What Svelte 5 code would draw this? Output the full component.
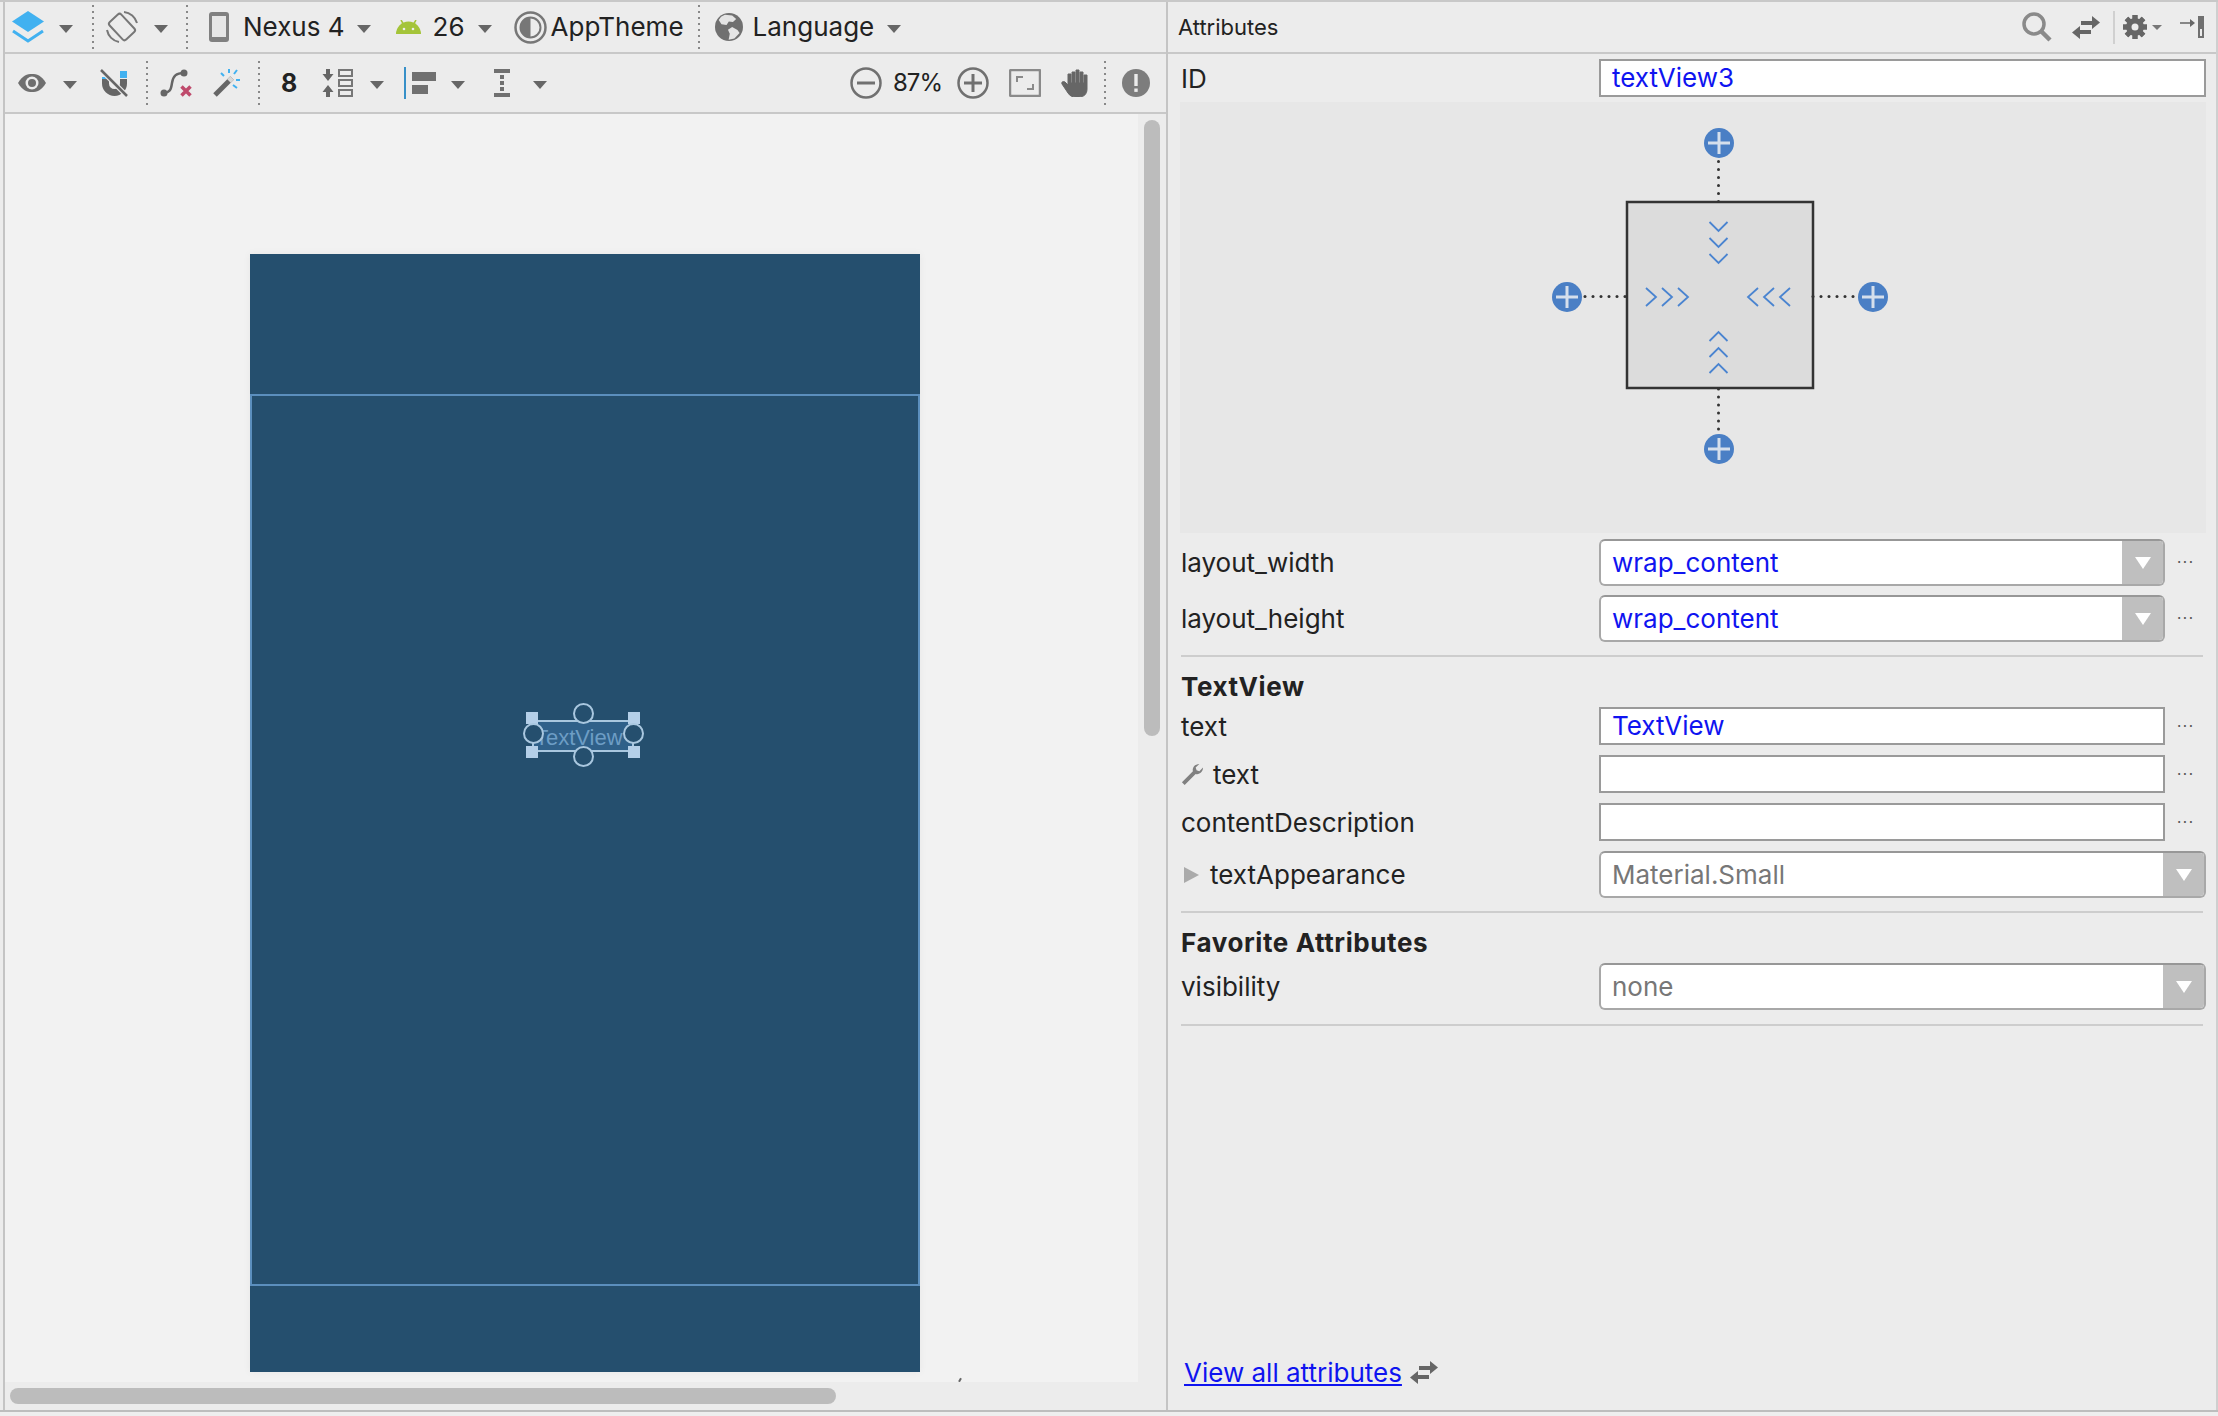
<script>
	const chevrons = [0, 1, 2];
	const teeth = [0, 45, 90, 135, 180, 225, 270, 315];
	const dots = [0, 1, 2, 3, 4, 5];
</script>

{#snippet swap()}
	<svg class="swap" viewBox="0 0 28 23">
		<path d="M9 5h11V0l8 6.500-8 6.500V9H9z" fill="#666" />
		<path d="M19 14H8v-4l-8 6.500L8 23v-5h11z" fill="#666" />
	</svg>
{/snippet}

{#snippet plus(cx, cy)}
	<circle {cx} {cy} r="15" fill="#4a7fc5" />
	<path d="M{cx - 11} {cy}h22M{cx} {cy - 11}v22" stroke="#d5dfec" stroke-width="3" />
{/snippet}

<div class="app">
	<section class="design">
		<div class="toolbar top">
			<svg class="layers" viewBox="0 0 32 32">
				<path d="M16 0l16 10.500-16 10.500L0 10.500z" fill="#41b1f0" />
				<path d="M1 20l15 10 15-10" fill="none" stroke="#41b1f0" stroke-width="3" />
			</svg>
			<i class="caret c1"></i>
			<i class="sep s1"></i>
			<svg class="rotate" viewBox="0 0 32 32">
				<rect x="8" y="4" width="16" height="24" rx="2.500" fill="none" stroke="#777" stroke-width="2" transform="rotate(-43 16 16)" />
				<path d="M18 1A15 15 0 0 1 31 12M1 19A15 15 0 0 0 13 31" fill="none" stroke="#777" stroke-width="2" />
			</svg>
			<i class="caret c2"></i>
			<i class="sep s2"></i>
			<svg class="phone" viewBox="0 0 20 30">
				<rect width="20" height="30" rx="3" fill="#808080" />
				<rect x="3" y="4" width="14" height="21" fill="#e6e6e6" />
			</svg>
			<span class="tb-text nexus">Nexus 4</span>
			<i class="caret c3"></i>
			<svg class="android" viewBox="0 0 25 14">
				<path d="M0 14a12.500 12.500 0 0 1 25 0z" fill="#a4c439" />
				<path d="M5 0l3 5M20 0l-3 5" stroke="#a4c439" stroke-width="1.500" />
				<circle cx="8" cy="9" r="1.300" fill="#ececec" />
				<circle cx="17" cy="9" r="1.300" fill="#ececec" />
			</svg>
			<span class="tb-text api">26</span>
			<i class="caret c4"></i>
			<svg class="theme" viewBox="0 0 33 33">
				<circle cx="16.500" cy="16.500" r="15" fill="none" stroke="#777" stroke-width="2.500" />
				<circle cx="16.500" cy="16.500" r="10" fill="none" stroke="#777" stroke-width="2" />
				<path d="M16.500 6.500a10 10 0 0 0 0 20z" fill="#777" />
			</svg>
			<span class="tb-text apptheme">AppTheme</span>
			<i class="sep s3"></i>
			<svg class="globe" viewBox="0 0 28 28">
				<circle cx="14" cy="14" r="14" fill="#707070" />
				<path d="M6 4l7-2 5 2-2 4-4 1-1 4-5 1-4-3 1-4zM17 13l6 1 3 2-3 7-5 3-1-6-3-3z" fill="#e4e4e4" transform="rotate(20 14 14)" />
			</svg>
			<span class="tb-text language">Language</span>
			<i class="caret c5"></i>
		</div>

		<div class="toolbar second">
			<svg class="eye" viewBox="0 0 28 18">
				<path d="M0 9C5 1 9 0 14 0s9 1 14 9c-5 8-9 9-14 9S5 17 0 9z" fill="#6f6f6f" />
				<circle cx="14" cy="9" r="6.500" fill="#ececec" />
				<circle cx="14" cy="9" r="4" fill="#6f6f6f" />
			</svg>
			<i class="caret c6"></i>
			<svg class="magnet" viewBox="0 0 29 28">
				<rect x="2" y="8" width="7" height="3" fill="#41b1f0" />
				<rect x="20" y="2" width="7" height="7" fill="#41b1f0" />
				<path d="M5.500 10v4.500a9 9 0 0 0 18 0V10" fill="none" stroke="#666" stroke-width="7" />
				<path d="M1 1l26 26" stroke="#ececec" stroke-width="5" />
				<path d="M1 1l26 26" stroke="#666" stroke-width="2.500" />
			</svg>
			<i class="sep s4"></i>
			<svg class="clear" viewBox="0 0 32 28">
				<path d="M4 24c6-1 7-3 8-10s4-10 12-10" fill="none" stroke="#666" stroke-width="2.500" />
				<circle cx="4" cy="24" r="3.500" fill="#666" />
				<circle cx="24" cy="4" r="3.500" fill="#666" />
				<path d="M21.500 17.500l9 9M30.500 17.500l-9 9" stroke="#bf4a6c" stroke-width="3.500" />
			</svg>
			<svg class="wand" viewBox="0 0 28 28">
				<path d="M3 26L20 9" stroke="#666" stroke-width="5" />
				<path d="M17 12l3-3" stroke="#d8d8d8" stroke-width="5" />
				<path d="M17 0v4M25 1l-3 4M28 11h-4M25 19l-4-3M9 4l3 3" stroke="#41b1f0" stroke-width="2" />
			</svg>
			<i class="sep s5"></i>
			<span class="margin-val">8</span>
			<svg class="stack" viewBox="0 0 31 28">
				<path d="M4 0h4v5h3.500L6 12 .5 5H4zM4 28h4v-5h3.500L6 16 .5 23H4z" fill="#666" />
				<path d="M17 1h13v6H17zM17 11h13v6H17zM17 21h13v6H17z" fill="none" stroke="#777" stroke-width="2" />
			</svg>
			<i class="caret c7"></i>
			<svg class="align" viewBox="0 0 33 32">
				<rect width="2" height="32" fill="#3790c8" />
				<rect x="8" y="5" width="24" height="9" fill="#707070" />
				<rect x="8" y="18" width="16" height="9" fill="#707070" />
			</svg>
			<i class="caret c8"></i>
			<svg class="spacing" viewBox="0 0 16 28">
				<rect width="16" height="4" fill="#707070" />
				<rect y="24" width="16" height="4" fill="#707070" />
				<path d="M8 6v16" stroke="#707070" stroke-width="4" stroke-dasharray="4 2" />
			</svg>
			<i class="caret c9"></i>

			<svg class="zoom-out" viewBox="0 0 32 32">
				<circle cx="16" cy="16" r="14.500" fill="none" stroke="#707070" stroke-width="2.500" />
				<path d="M7 16h18" stroke="#707070" stroke-width="3" />
			</svg>
			<span class="tb-text percent">87%</span>
			<svg class="zoom-in" viewBox="0 0 32 32">
				<circle cx="16" cy="16" r="14.500" fill="none" stroke="#707070" stroke-width="2.500" />
				<path d="M7 16h18M16 7v18" stroke="#707070" stroke-width="3" />
			</svg>
			<svg class="fit" viewBox="0 0 32 28">
				<rect x="1" y="1" width="30" height="26" rx="1" fill="none" stroke="#8a8a8a" stroke-width="2.500" />
				<path d="M8 13V8h6M24 15v5h-6" fill="none" stroke="#8a8a8a" stroke-width="2" />
			</svg>
			<svg class="hand" viewBox="0 0 27 28">
				<path d="M7 5v11l-3-3c-2-1-4 0-3 2l6 9c2 3 4 4 8 4h3c5 0 8-3 8-8V6h-3v8h-1V3h-3v11h-1V1h-3v13h-1V3h-3v11h-1V5z" fill="#666" stroke="#666" stroke-width="1" />
			</svg>
			<i class="sep s6"></i>
			<svg class="warn" viewBox="0 0 28 28">
				<circle cx="14" cy="14" r="14" fill="#7d7d7d" />
				<rect x="12.300" y="5" width="3.400" height="12" fill="#ececec" />
				<rect x="12.300" y="19.500" width="3.400" height="3.400" fill="#ececec" />
			</svg>
		</div>

		<div class="canvas-row">
			<div class="canvas">
				<div class="device">
					<div class="blueprint"></div>
					<div class="widget">
						<span class="widget-box">TextView</span>
						<i class="corner tl"></i>
						<i class="corner tr"></i>
						<i class="corner bl"></i>
						<i class="corner br"></i>
						<i class="anchor at"></i>
						<i class="anchor al"></i>
						<i class="anchor ar"></i>
						<i class="anchor ab"></i>
					</div>
				</div>
				<i class="tick"></i>
			</div>
			<div class="v-track"><div class="v-thumb"></div></div>
		</div>
		<div class="h-track"><div class="h-thumb"></div></div>
	</section>

	<section class="inspector">
		<header class="ins-head">
			<span class="ins-title">Attributes</span>
			<svg class="search" viewBox="0 0 30 30">
				<circle cx="12" cy="12" r="10" fill="none" stroke="#8a8a8a" stroke-width="3.500" />
				<path d="M19 19l9 9" stroke="#8a8a8a" stroke-width="4.500" />
			</svg>
			{@render swap()}
			<i class="head-sep"></i>
			<svg class="gear" viewBox="0 0 24 24">
				{#each teeth as a}
					<rect x="9.500" y="0" width="5" height="24" fill="#666" transform="rotate({a} 12 12)" />
				{/each}
				<circle cx="12" cy="12" r="9" fill="#666" />
				<circle cx="12" cy="12" r="3.500" fill="#ececec" />
			</svg>
			<i class="mini-caret"></i>
			<svg class="pin" viewBox="0 0 24 22">
				<path d="M0 7h11" stroke="#666" stroke-width="1.500" />
				<path d="M10 3l5 4-5 4z" fill="#666" />
				<rect x="18" y="0" width="6" height="22" fill="#707070" />
				<rect x="20" y="13" width="2" height="7" fill="#ececec" />
			</svg>
		</header>

		<div class="ins-body">
			<div class="row id-row">
				<span class="label">ID</span>
				<span class="field value">textView3</span>
			</div>

			<div class="constraint">
				<svg class="constraint-svg" viewBox="0 0 380 380">
					<rect x="107" y="92" width="186" height="186" fill="#dcdcdc" stroke="#333" stroke-width="2.500" />
					<g fill="#333">
						{#each dots as d}
							<circle cx="198.500" cy={51.500 + d * 8} r="1.500" />
							<circle cx="198.500" cy={279 + d * 8} r="1.500" />
							<circle cx={65 + d * 8} cy="186.500" r="1.500" />
							<circle cx={293 + d * 8} cy="186.500" r="1.500" />
						{/each}
					</g>
					{@render plus(199, 33)}
					{@render plus(47, 187)}
					{@render plus(353, 187)}
					{@render plus(199, 339)}
					<g fill="none" stroke="#4a84d0" stroke-width="1.800">
						{#each chevrons as c}
							<path d="M189.500 {112 + c * 16}l9 9 9-9" />
							<path d="M189.500 {263 - c * 16}l9-9 9 9" />
							<path d="M{126 + c * 16} 178l10 9-10 9" />
							<path d="M{270 - c * 16} 178l-10 9 10 9" />
						{/each}
					</g>
				</svg>
			</div>

			<div class="row dd-row first">
				<span class="label">layout_width</span>
				<div class="combo"><span class="value">wrap_content</span><i class="combo-btn"></i></div>
				<span class="more">...</span>
			</div>
			<div class="row dd-row second-dd">
				<span class="label">layout_height</span>
				<div class="combo"><span class="value">wrap_content</span><i class="combo-btn"></i></div>
				<span class="more">...</span>
			</div>

			<hr />
			<h3>TextView</h3>

			<div class="row input-row">
				<span class="label">text</span>
				<span class="field value">TextView</span>
				<span class="more">...</span>
			</div>
			<div class="row input-row">
				<span class="label">
					<svg class="wrench" viewBox="0 0 24 24">
						<path d="M1 21l12-12c-1-4 2-8 7-8l-4 4 1 3 3 1 4-4c0 5-4 8-8 7L4 24z" fill="#808080" />
					</svg>text
				</span>
				<span class="field"></span>
				<span class="more">...</span>
			</div>
			<div class="row input-row">
				<span class="label">contentDescription</span>
				<span class="field"></span>
				<span class="more">...</span>
			</div>
			<div class="row input-row wide">
				<span class="label"><i class="expand"></i>textAppearance</span>
				<div class="combo"><span class="hint">Material.Small</span><i class="combo-btn"></i></div>
			</div>

			<hr class="hr2" />
			<h3>Favorite Attributes</h3>

			<div class="row wide vis-row">
				<span class="label">visibility</span>
				<div class="combo"><span class="hint">none</span><i class="combo-btn"></i></div>
			</div>

			<hr class="hr3" />

			<div class="view-all">
				<span class="link">View all attributes</span>
				{@render swap()}
			</div>
		</div>
	</section>
</div>

<style>
	:global(body) {
		background: #eeeeee;
	}
	.app {
		display: flex;
		box-sizing: border-box;
		width: 2218px;
		height: 1412px;
		overflow: hidden;
		padding-left: 3px;
		background: #ececec;
		border-top: 2px solid #c8c8c8;
		border-bottom: 2px solid #bdbdbd;
		font-family: Inter, 'Liberation Sans', sans-serif;
		font-size: 26px;
		color: #222;
	}
	svg {
		display: block;
		flex: none;
	}

	/* LEFT SIDE */
	.design {
		display: flex;
		flex-direction: column;
		width: 1163px;
		box-sizing: border-box;
		border-left: 2px solid #c4c4c4;
		flex: none;
	}
	.toolbar {
		display: flex;
		align-items: center;
		flex: none;
		box-sizing: border-box;
		border-bottom: 2px solid #c8c8c8;
	}
	.top {
		height: 52px;
	}
	.second {
		height: 60px;
	}
	.tb-text {
		flex: none;
		line-height: 30px;
	}
	.caret {
		flex: none;
		width: 0;
		height: 0;
		border-left: 7px solid transparent;
		border-right: 7px solid transparent;
		border-top: 8px solid #666;
		margin-top: 4px;
	}
	.sep {
		flex: none;
		width: 2px;
		height: 44px;
		background: repeating-linear-gradient(#888 0 2px, transparent 2px 6px);
	}

	.layers { width: 32px; height: 32px; margin-left: 7px; }
	.c1 { margin-left: 15px; }
	.s1 { margin-left: 19px; }
	.rotate { width: 32px; height: 32px; margin-left: 12px; }
	.c2 { margin-left: 16px; }
	.s2 { margin-left: 18px; }
	.phone { width: 20px; height: 30px; margin-left: 21px; }
	.nexus { margin-left: 14px; }
	.c3 { margin-left: 12px; }
	.android { width: 25px; height: 14px; margin-left: 25px; }
	.api { margin-left: 12px; }
	.c4 { margin-left: 13px; }
	.theme { width: 33px; height: 33px; margin-left: 22px; }
	.apptheme { margin-left: 4px; }
	.s3 { margin-left: 14px; }
	.globe { width: 28px; height: 28px; margin-left: 15px; }
	.language { margin-left: 10px; }
	.c5 { margin-left: 13px; }

	.eye { width: 28px; height: 18px; margin-left: 13px; }
	.c6 { margin-left: 17px; }
	.magnet { width: 29px; height: 28px; margin-left: 23px; }
	.s4 { margin-left: 17px; }
	.clear { width: 32px; height: 28px; margin-left: 12px; }
	.wand { width: 28px; height: 28px; margin-left: 20px; }
	.s5 { margin-left: 18px; }
	.margin-val { flex: none; width: 15px; margin-left: 21px; font-weight: 700; font-size: 25px; }
	.stack { width: 31px; height: 28px; margin-left: 26px; }
	.c7 { margin-left: 17px; }
	.align { width: 33px; height: 32px; margin-left: 20px; }
	.c8 { margin-left: 14px; }
	.spacing { width: 16px; height: 28px; margin-left: 29px; }
	.c9 { margin-left: 23px; }
	.zoom-out { width: 32px; height: 32px; margin-left: auto; }
	.percent { margin-left: 11px; font-size: 24px; letter-spacing: -1px; }
	.zoom-in { width: 32px; height: 32px; margin-left: 15px; }
	.fit { width: 32px; height: 28px; margin-left: 20px; }
	.hand { width: 27px; height: 28px; margin-left: 20px; }
	.s6 { margin-left: 16px; }
	.warn { width: 28px; height: 28px; margin-left: 16px; margin-right: 16px; }

	.canvas-row {
		display: flex;
		height: 1268px;
		flex: none;
	}
	.canvas {
		position: relative;
		width: 1133px;
		flex: none;
		overflow: hidden;
		box-sizing: border-box;
		padding: 140px 0 0 245px;
		background: #f2f2f2;
	}
	.device {
		position: relative;
		width: 670px;
		height: 1118px;
		background: #254f6e;
		box-shadow: 0 0 8px rgba(0, 0, 0, 0.05);
	}
	.tick {
		position: absolute;
		left: 954px;
		bottom: 0;
		width: 2px;
		height: 4px;
		background: #666;
		transform: rotate(30deg);
	}
	.blueprint {
		position: absolute;
		left: 0;
		right: 0;
		top: 140px;
		height: 892px;
		box-sizing: border-box;
		border: 2px solid #5b8fbe;
	}
	.widget {
		position: absolute;
		left: 282px;
		top: 466px;
		width: 102px;
		height: 32px;
	}
	.widget-box {
		display: block;
		box-sizing: border-box;
		height: 100%;
		padding-left: 1px;
		background: #2f6089;
		border: 2px solid #a9c7df;
		font-family: 'Liberation Sans', sans-serif;
		font-size: 22px;
		line-height: 31px;
		color: #6d9dc5;
		white-space: nowrap;
	}
	.corner {
		position: absolute;
		width: 12px;
		height: 12px;
		background: #b4cfe8;
	}
	.tl { left: -6px; top: -8px; }
	.tr { right: -6px; top: -8px; }
	.bl { left: -6px; bottom: -6px; }
	.br { right: -6px; bottom: -6px; }
	.anchor {
		position: absolute;
		box-sizing: border-box;
		width: 21px;
		height: 21px;
		border-radius: 50%;
		border: 2px solid #a9c7df;
		background: #254f6e;
	}
	.at { left: 41px; top: -17px; }
	.ab { left: 41px; bottom: -15px; }
	.al { left: -9px; top: 3px; }
	.ar { right: -10px; top: 3px; }

	.v-track {
		flex: 1;
		padding: 6px 0 0 6px;
	}
	.v-thumb {
		width: 16px;
		height: 616px;
		border-radius: 8px;
		background: #bcbcbc;
	}
	.h-track {
		flex: 1;
		padding: 6px 0 0 5px;
	}
	.h-thumb {
		width: 826px;
		height: 16px;
		border-radius: 8px;
		background: #bcbcbc;
	}

	/* RIGHT SIDE */
	.inspector {
		display: flex;
		flex-direction: column;
		flex: 1;
		box-sizing: border-box;
		border-left: 2px solid #c4c4c4;
		border-right: 2px solid #cfcfcf;
	}
	.ins-head {
		display: flex;
		align-items: center;
		flex: none;
		box-sizing: border-box;
		height: 52px;
		border-bottom: 2px solid #c8c8c8;
		padding-left: 10px;
	}
	.ins-title {
		font-size: 22px;
		margin-right: auto;
	}
	.search { width: 30px; height: 30px; }
	.swap { width: 28px; height: 23px; margin-left: 20px; }
	.head-sep {
		flex: none;
		width: 2px;
		height: 33px;
		margin-left: 13px;
		background: #d0d0d0;
	}
	.gear { width: 24px; height: 24px; margin-left: 8px; }
	.mini-caret {
		flex: none;
		width: 0;
		height: 0;
		margin-left: 5px;
		border-left: 5px solid transparent;
		border-right: 5px solid transparent;
		border-top: 5px solid #777;
	}
	.pin { width: 24px; height: 22px; margin-left: 18px; margin-right: 12px; }

	.ins-body {
		display: flex;
		flex-direction: column;
		flex: 1;
		padding: 5px 10px 0 12px;
	}
	.row {
		display: flex;
		align-items: center;
		flex: none;
	}
	.label {
		display: flex;
		align-items: center;
		flex: none;
		box-sizing: border-box;
		width: 419px;
		padding-left: 1px;
	}
	.value {
		color: #0f14f0;
	}
	.hint {
		color: #777;
	}
	.field {
		display: block;
		flex: 1;
		box-sizing: border-box;
		height: 38px;
		line-height: 34px;
		padding-left: 11px;
		background: #fff;
		border: 2px solid #9a9a9a;
	}
	.more {
		flex: none;
		box-sizing: border-box;
		width: 41px;
		padding: 0 0 10px 12px;
		font-size: 15px;
		letter-spacing: 1.5px;
		color: #555;
	}
	.constraint {
		flex: none;
		height: 431px;
		margin-top: 5px;
		padding: 8px 0 0 340px;
		box-sizing: border-box;
		background: #e7e7e7;
	}
	.constraint-svg {
		width: 380px;
		height: 380px;
	}
	.combo {
		display: flex;
		align-items: center;
		flex: 1;
		box-sizing: border-box;
		height: 47px;
		padding-left: 11px;
		overflow: hidden;
		background: #fff;
		border: 2px solid #a8a8a8;
		border-top-color: #979797;
		border-radius: 6px;
	}
	.combo span {
		margin-right: auto;
	}
	.combo-btn {
		position: relative;
		flex: none;
		width: 43px;
		height: 47px;
		margin-right: -2px;
		background: #bfbfbf;
	}
	.combo-btn::after {
		content: '';
		position: absolute;
		left: 13px;
		top: 18px;
		border-left: 8px solid transparent;
		border-right: 8px solid transparent;
		border-top: 12px solid #fff;
	}
	.first {
		margin-top: 6px;
	}
	.second-dd {
		margin-top: 9px;
	}
	.input-row {
		margin-bottom: 10px;
	}
	.wide {
		margin-bottom: 0;
	}
	hr {
		flex: none;
		width: 1022px;
		height: 2px;
		margin: 13px 0 0 1px;
		border: 0;
		background: #cdcdcd;
	}
	.hr2 { margin-top: 13px; }
	.hr3 { margin-top: 14px; }
	h3 {
		flex: none;
		margin: 14px 0 4px 1px;
		font-size: 26px;
		line-height: 32px;
		font-weight: 700;
		letter-spacing: 0.6px;
	}
	.wrench {
		width: 22px;
		height: 22px;
		margin-right: 10px;
	}
	.expand {
		flex: none;
		width: 0;
		height: 0;
		margin: 0 11px 0 3px;
		border-top: 8px solid transparent;
		border-bottom: 8px solid transparent;
		border-left: 15px solid #aaa;
	}
	.view-all {
		display: flex;
		align-items: center;
		margin-top: auto;
		margin-bottom: 22px;
		padding-left: 4px;
	}
	.link {
		color: #0f14f0;
		text-decoration: underline;
	}
	.view-all .swap {
		margin-left: 8px;
	}
</style>
